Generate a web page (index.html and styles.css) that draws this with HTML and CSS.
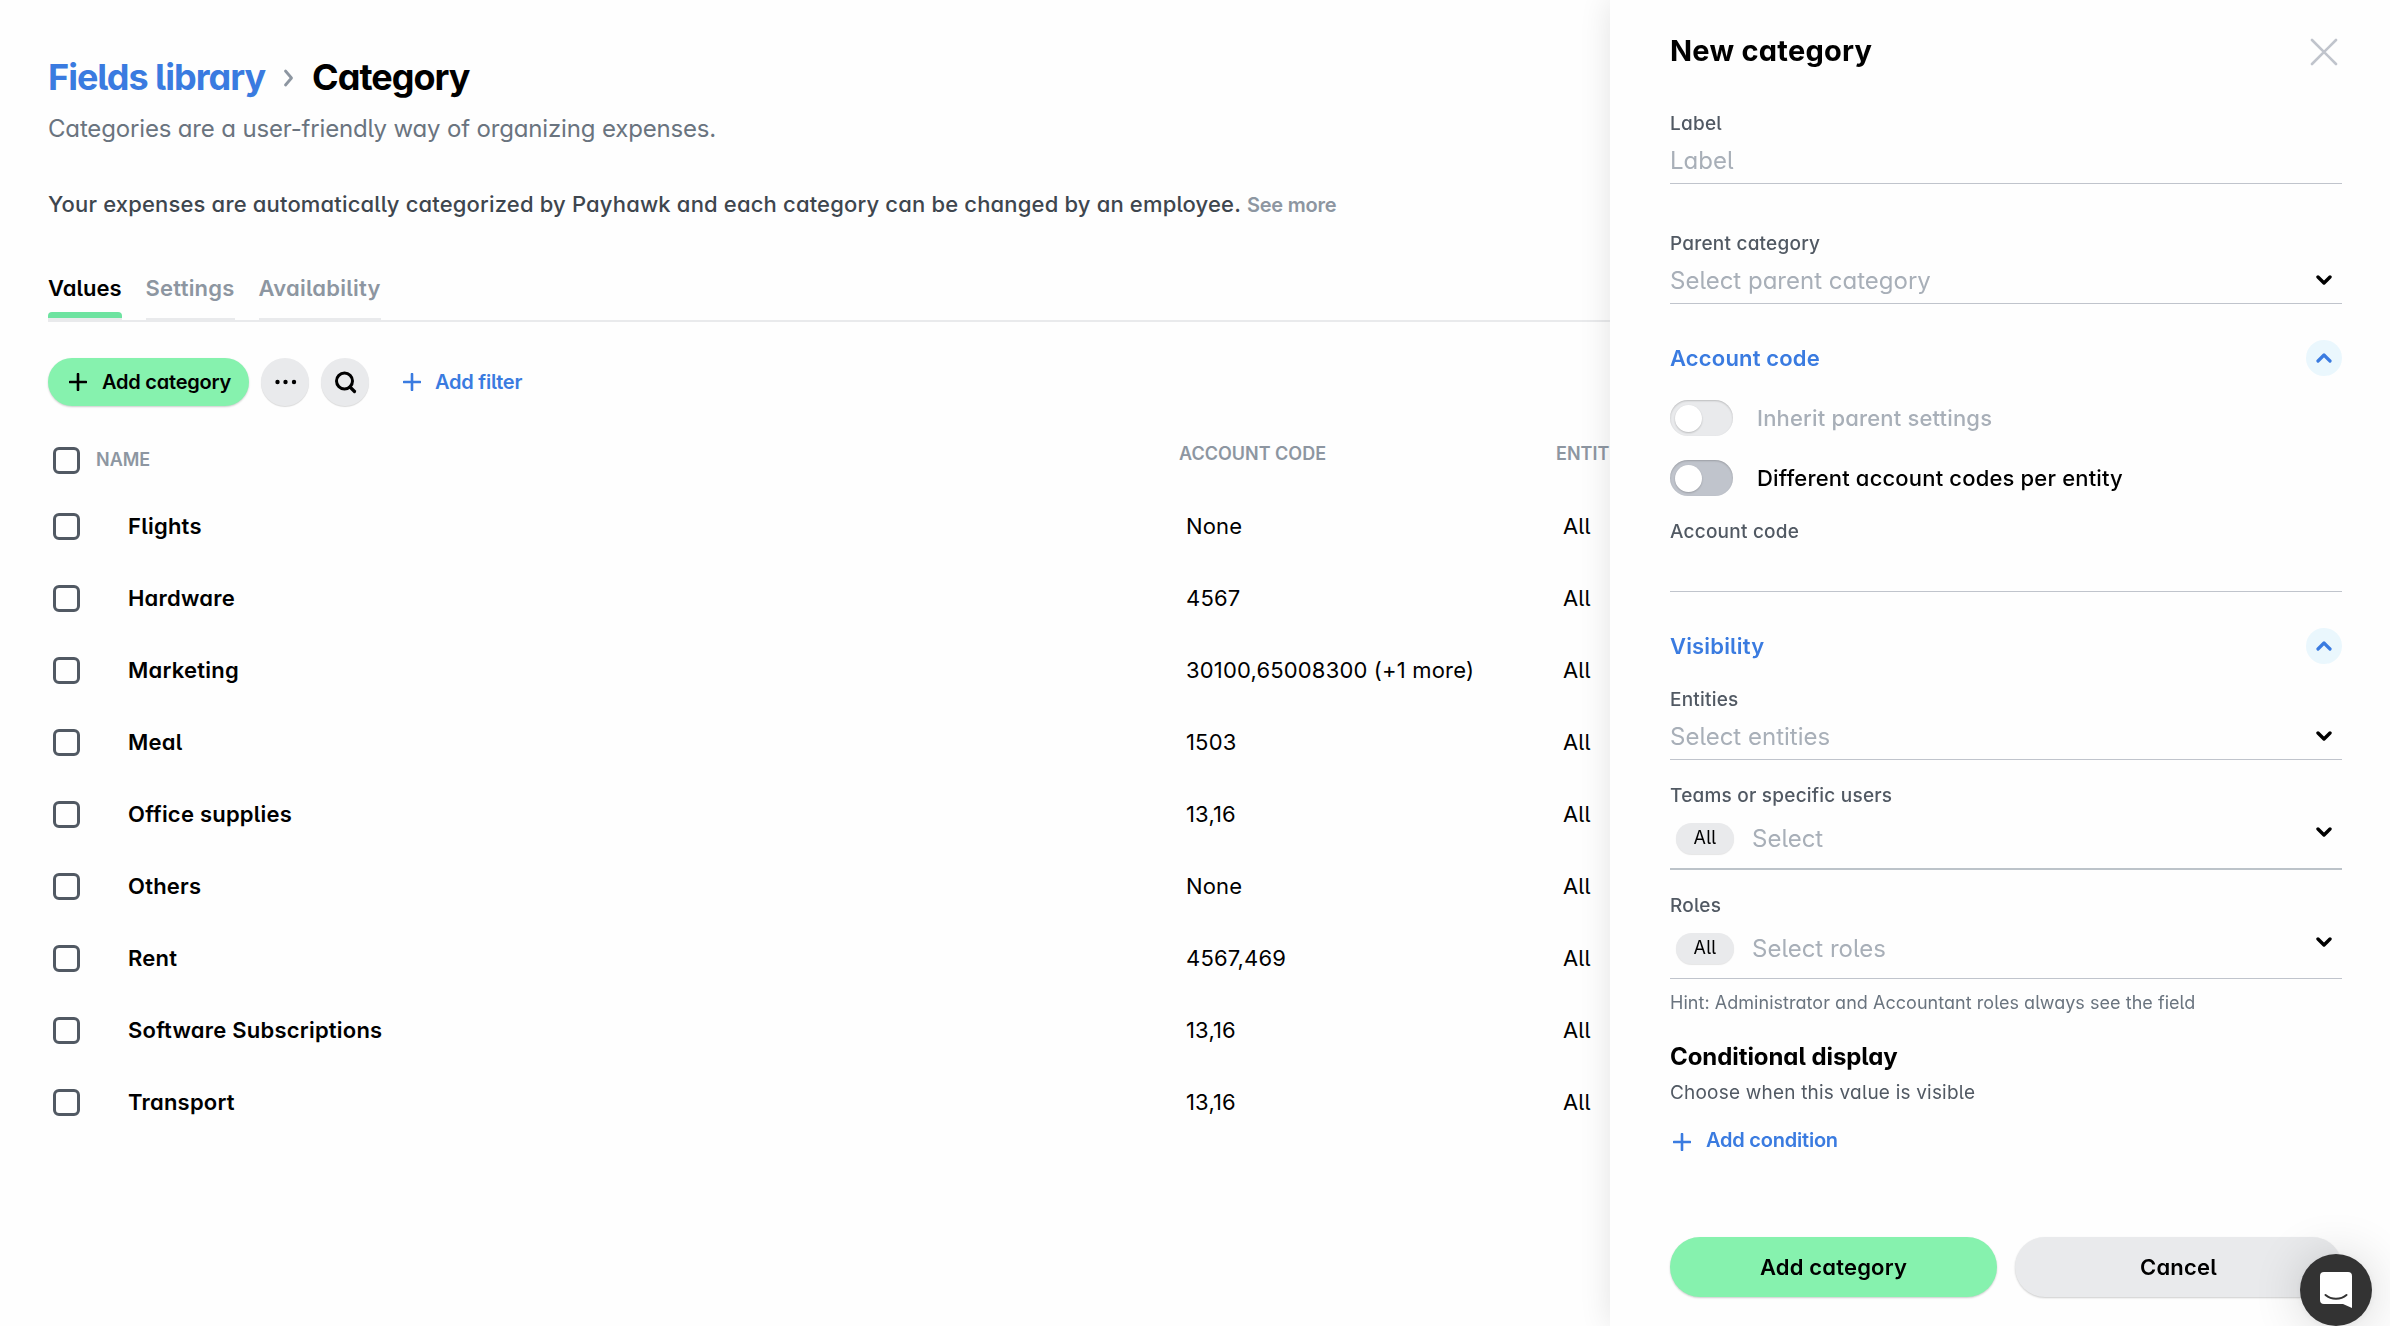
FILE: index.html
```
<!DOCTYPE html>
<html lang="en">
	<head>
		<meta charset="utf-8">
		<title>Fields library - Category</title>
		<link rel="stylesheet" href="styles.css">
	</head>
	<body>
		<main class="page">
			<h1 class="breadcrumb">
				<a class="link">Fields library</a>
				<svg class="sep" width="12" height="20" viewBox="0 0 12 20"><path d="M2.5 3l6 7-6 7" /></svg>
				<span>Category</span>
			</h1>
			<p class="subtitle">Categories are a user-friendly way of organizing expenses.</p>
			<p class="info"><span class="info-text">Your expenses are automatically categorized by Payhawk and each category can be changed by an employee.</span><a class="more">See more</a></p>
			<nav class="tabs">
				<a class="tab active">Values</a>
				<a class="tab">Settings</a>
				<a class="tab">Availability</a>
			</nav>
			<div class="toolbar">
				<button class="btn-add">
					<svg width="18" height="18" viewBox="0 0 18 18"><path d="M9 1v16M1 9h16" /></svg>
					<span>Add category</span>
				</button>
				<button class="btn-round">
					<svg width="24" height="24" viewBox="0 0 24 24"><circle cx="4.5" cy="12" r="2.2" /><circle cx="12.5" cy="12" r="2.2" /><circle cx="21" cy="12" r="2.2" /></svg>
				</button>
				<button class="btn-round search">
					<svg width="24" height="24" viewBox="0 0 24 24"><circle cx="11.5" cy="11" r="8" /><path d="M17 17l4.5 4.5" /></svg>
				</button>
				<button class="btn-link">
					<svg width="18" height="18" viewBox="0 0 18 18"><path d="M9 1v16M1 9h16" /></svg>
					<span>Add filter</span>
				</button>
			</div>
			<div class="table">
				<div class="thead">
					<i class="check"></i>
					<span class="th name">Name</span>
					<span class="th code">Account code</span>
					<span class="th">Entity</span>
				</div>
				<div class="row"><i class="check"></i><b class="name">Flights</b><span class="code">None</span><span>All</span></div>
				<div class="row"><i class="check"></i><b class="name">Hardware</b><span class="code">4567</span><span>All</span></div>
				<div class="row"><i class="check"></i><b class="name">Marketing</b><span class="code">30100,65008300 (+1 more)</span><span>All</span></div>
				<div class="row"><i class="check"></i><b class="name">Meal</b><span class="code">1503</span><span>All</span></div>
				<div class="row"><i class="check"></i><b class="name">Office supplies</b><span class="code">13,16</span><span>All</span></div>
				<div class="row"><i class="check"></i><b class="name">Others</b><span class="code">None</span><span>All</span></div>
				<div class="row"><i class="check"></i><b class="name">Rent</b><span class="code">4567,469</span><span>All</span></div>
				<div class="row"><i class="check"></i><b class="name">Software Subscriptions</b><span class="code">13,16</span><span>All</span></div>
				<div class="row"><i class="check"></i><b class="name">Transport</b><span class="code">13,16</span><span>All</span></div>
			</div>
		</main>

		<aside class="drawer">
			<header class="drawer-head">
				<h2>New category</h2>
				<svg class="close" width="28" height="28" viewBox="0 0 28 28"><path d="M2 2l24 24M26 2L2 26" /></svg>
			</header>

			<div class="field first">
				<label>Label</label>
				<div class="control"><span class="placeholder">Label</span></div>
			</div>
			<div class="field parent">
				<label>Parent category</label>
				<div class="control">
					<span class="placeholder">Select parent category</span>
					<svg class="arrow" width="24" height="24" viewBox="0 0 24 24"><path d="M6 9l6 6 6-6" /></svg>
				</div>
			</div>

			<div class="section-head">
				<h3>Account code</h3>
				<span class="collapse"><svg width="24" height="24" viewBox="0 0 24 24"><path d="M6 15l6-6 6 6" /></svg></span>
			</div>
			<div class="switch disabled"><i></i><span>Inherit parent settings</span></div>
			<div class="switch"><i></i><span>Different account codes per entity</span></div>
			<div class="field">
				<label>Account code</label>
				<div class="control"></div>
			</div>

			<div class="section-head">
				<h3>Visibility</h3>
				<span class="collapse"><svg width="24" height="24" viewBox="0 0 24 24"><path d="M6 15l6-6 6 6" /></svg></span>
			</div>
			<div class="field">
				<label>Entities</label>
				<div class="control">
					<span class="placeholder">Select entities</span>
					<svg class="arrow" width="24" height="24" viewBox="0 0 24 24"><path d="M6 9l6 6 6-6" /></svg>
				</div>
			</div>
			<div class="field">
				<label>Teams or specific users</label>
				<div class="control multi thick">
					<span class="chip">All</span>
					<span class="placeholder">Select</span>
					<svg class="arrow" width="24" height="24" viewBox="0 0 24 24"><path d="M6 9l6 6 6-6" /></svg>
				</div>
			</div>
			<div class="field">
				<label>Roles</label>
				<div class="control multi">
					<span class="chip">All</span>
					<span class="placeholder">Select roles</span>
					<svg class="arrow" width="24" height="24" viewBox="0 0 24 24"><path d="M6 9l6 6 6-6" /></svg>
				</div>
				<p class="hint">Hint: Administrator and Accountant roles always see the field</p>
			</div>

			<h4 class="cond-title">Conditional display</h4>
			<p class="cond-text">Choose when this value is visible</p>
			<a class="add-cond">
				<svg width="18" height="18" viewBox="0 0 18 18"><path d="M9 1v16M1 9h16" /></svg>
				<span>Add condition</span>
			</a>

			<footer class="drawer-foot">
				<button class="btn primary">Add category</button>
				<button class="btn">Cancel</button>
			</footer>
		</aside>

		<div class="chat">
			<svg width="32" height="36" viewBox="0 0 32 36">
				<path fill="#fff" d="M4 0h24a4 4 0 0 1 4 4v32l-9-4H4a4 4 0 0 1-4-4V4a4 4 0 0 1 4-4z" />
				<path fill="none" stroke="#333" stroke-width="2" stroke-linecap="round" d="M5.500 23c6 5 15 5 21 0" />
			</svg>
		</div>
	</body>
</html>
```

FILE: styles.css
```
* {
	margin: 0;
	padding: 0;
	box-sizing: border-box;
}
body {
	height: 1326px;
	overflow: hidden;
	font-family: Inter, "Liberation Sans", sans-serif;
	font-feature-settings: "cv05", "cv11";
	font-size: 22px;
	letter-spacing: .17px;
	color: #000;
	background: #fefefe;
	white-space: nowrap;
}
button {
	border: 0;
	font: inherit;
	font-feature-settings: inherit;
	letter-spacing: inherit;
}
svg {
	display: block;
	flex: none;
}
.page {
	padding: 55px 0 0 48px;
}

/* heading */
.breadcrumb {
	display: flex;
	align-items: center;
	line-height: 44px;
	font-size: 36px;
	font-weight: 700;
	letter-spacing: -1px;
}
.breadcrumb .link {
	color: #3a7be0;
}
.sep {
	margin: 2px 17px 0 18px;
	fill: none;
	stroke: #8d96a1;
	stroke-width: 2.8;
	stroke-linecap: round;
	stroke-linejoin: round;
}
.subtitle {
	margin-top: 14px;
	font-size: 24px;
	line-height: 32px;
	letter-spacing: -.16px;
	color: #6a747f;
}
.info {
	display: flex;
	align-items: baseline;
	height: 32px;
	margin-top: 43px;
	line-height: 32px;
	font-weight: 500;
	color: #3e464e;
}
.more {
	margin-left: 6px;
	font-size: 20px;
	font-weight: 600;
	letter-spacing: -.25px;
	color: #8d96a1;
}

/* tabs */
.tabs {
	display: flex;
	gap: 24px;
	margin-top: 52px;
	border-bottom: 2px solid #e9eaec;
}
.tab {
	padding-bottom: 14px;
	line-height: 32px;
	font-weight: 600;
	letter-spacing: .22px;
	color: #8d96a1;
	border-bottom: 2px solid #e9eaec;
}
.tab.active {
	padding-bottom: 8px;
	letter-spacing: 0;
	color: #000;
}
.tab.active::after {
	content: "";
	display: block;
	height: 6px;
	margin-top: 8px;
	margin-bottom: -8px;
	background: #6de3a0;
	border-radius: 4px 4px 0 0;
}

/* toolbar */
.toolbar {
	display: flex;
	margin-top: 36px;
	font-size: 20px;
	font-weight: 600;
	letter-spacing: -.22px;
}
.toolbar path,
.add-cond path {
	fill: none;
	stroke: currentColor;
	stroke-width: 2.6;
	stroke-linecap: round;
}
.btn-add {
	display: flex;
	align-items: center;
	gap: 15px;
	width: 201px;
	height: 48px;
	padding-left: 21px;
	border-radius: 24px;
	background: #86f2ae;
	box-shadow: 0 1px 2px rgba(0, 0, 0, .2);
}
.btn-add span,
.btn-link span {
	padding-bottom: 1px;
}
.btn-round {
	display: flex;
	align-items: center;
	justify-content: center;
	width: 48px;
	height: 48px;
	margin-left: 12px;
	border-radius: 50%;
	background: #e9eaec;
	box-shadow: 0 1px 1px rgba(0, 0, 0, .14);
}
.search circle {
	fill: none;
	stroke: #000;
	stroke-width: 3;
}
.search path {
	stroke-width: 3.2;
}
.btn-link {
	display: flex;
	align-items: center;
	gap: 14px;
	margin-left: 34px;
	color: #3a7be0;
	background: none;
}

/* table */
.table {
	margin-top: 34px;
	padding-left: 5px;
}
.thead,
.row {
	display: flex;
}
.thead {
	height: 50px;
}
.th {
	padding-top: 1px;
	line-height: 26px;
	font-size: 18px;
	font-weight: 600;
	letter-spacing: 0;
	text-transform: uppercase;
	color: #8d96a1;
}
.check {
	flex: none;
	width: 27px;
	height: 27px;
	margin-top: 23px;
	border: 3px solid #515963;
	border-radius: 6px;
}
.thead .check {
	margin-top: 7px;
}
.th.name {
	width: 1099px;
	padding: 7px 0 0 16px;
}
.th.code {
	width: 377px;
}
.row {
	height: 72px;
	line-height: 72px;
}
.row .name {
	width: 1106px;
	padding-left: 48px;
	font-weight: 600;
	letter-spacing: .22px;
}
.row .code {
	width: 377px;
}

/* drawer */
.drawer {
	position: fixed;
	top: 0;
	right: 0;
	bottom: 0;
	width: 780px;
	padding: 32px 48px 0 60px;
	background: #fefefe;
	box-shadow: 0 0 30px rgba(0, 0, 0, .11);
}
.drawer-head {
	display: flex;
	justify-content: space-between;
	align-items: center;
	height: 40px;
	padding-right: 4px;
}
.drawer-head h2 {
	padding-bottom: 3px;
	font-size: 29px;
	font-weight: 700;
	letter-spacing: .25px;
}
.close {
	fill: none;
	stroke: #c0c4cc;
	stroke-width: 2.6;
	stroke-linecap: round;
}
.field {
	margin-top: 23px;
}
.field.first {
	margin-top: 39px;
}
.field.parent {
	margin-top: 47px;
}
.field label {
	display: block;
	margin-bottom: 7px;
	line-height: 26px;
	font-size: 19px;
	font-weight: 500;
	letter-spacing: .22px;
	color: #515963;
}
.control {
	display: flex;
	height: 40px;
	line-height: 34px;
	border-bottom: 1px solid #c0c4cc;
}
.control.multi {
	height: 53px;
	line-height: 46px;
}
.control.thick {
	height: 54px;
	border-bottom: 2px solid #bcc3c9;
}
.placeholder {
	flex: 1;
	font-size: 24px;
	letter-spacing: 0;
	color: #a8afb8;
}
.arrow {
	margin: 4px 6px 0 0;
	fill: none;
	stroke: #000;
	stroke-width: 3.4;
	stroke-linecap: round;
	stroke-linejoin: round;
}
.chip {
	width: 58px;
	height: 31px;
	margin: 7px 18px 0 6px;
	line-height: 29px;
	font-size: 18px;
	text-align: center;
	border-radius: 16px;
	background: #e9eaec;
	box-shadow: 0 1px 1px rgba(0, 0, 0, .1);
}
.section-head {
	display: flex;
	justify-content: space-between;
	align-items: center;
	height: 36px;
	margin-top: 36px;
	color: #3a7be0;
}
.section-head h3 {
	font-size: 22px;
	font-weight: 600;
}
.collapse {
	padding: 6px;
	border-radius: 50%;
	background: #eaf7fd;
}
.collapse path {
	fill: none;
	stroke: #3a7be0;
	stroke-width: 3.2;
	stroke-linecap: round;
	stroke-linejoin: round;
}
.switch {
	display: flex;
	gap: 24px;
	margin-top: 24px;
	line-height: 36px;
	font-weight: 500;
}
.switch i {
	width: 63px;
	height: 36px;
	padding: 5px;
	border-radius: 18px;
	background: #c0c4cc;
	box-shadow: inset 0 1px 2px rgba(0, 0, 0, .2);
}
.switch i::before {
	content: "";
	display: block;
	width: 27px;
	height: 27px;
	border-radius: 50%;
	background: #fff;
	box-shadow: 0 1px 2px rgba(0, 0, 0, .2);
}
.switch.disabled {
	color: #a8afb8;
}
.switch.disabled i {
	background: #e9eaec;
}
.hint {
	margin-top: 12px;
	line-height: 24px;
	font-size: 18px;
	letter-spacing: .04px;
	color: #6a747f;
}
.cond-title {
	margin-top: 25px;
	line-height: 34px;
	font-size: 24px;
	font-weight: 700;
	letter-spacing: -.07px;
}
.cond-text {
	margin-top: 6px;
	line-height: 26px;
	font-size: 19px;
	letter-spacing: .2px;
	color: #515963;
}
.add-cond {
	display: flex;
	gap: 15px;
	margin: 22px 0 0 3px;
	line-height: 24px;
	font-size: 20px;
	font-weight: 600;
	letter-spacing: -.22px;
	color: #3a7be0;
}
.add-cond svg {
	margin-top: 5px;
}
.drawer-foot {
	display: flex;
	gap: 18px;
	margin-top: 85px;
}
.btn {
	flex: 1;
	height: 60px;
	border-radius: 30px;
	font-size: 22px;
	font-weight: 600;
	background: #e9eaec;
	box-shadow: 0 1px 2px rgba(0, 0, 0, .2);
}
.btn.primary {
	background: #86f2ae;
}

/* messenger launcher, floats over the drawer */
.chat {
	position: fixed;
	right: 18px;
	bottom: 0;
	width: 72px;
	height: 72px;
	padding: 18px 20px;
	border-radius: 50%;
	background: #333;
	box-shadow: 0 2px 50px rgba(0, 0, 0, .16), 0 1px 9px rgba(0, 0, 0, .06);
}
```
